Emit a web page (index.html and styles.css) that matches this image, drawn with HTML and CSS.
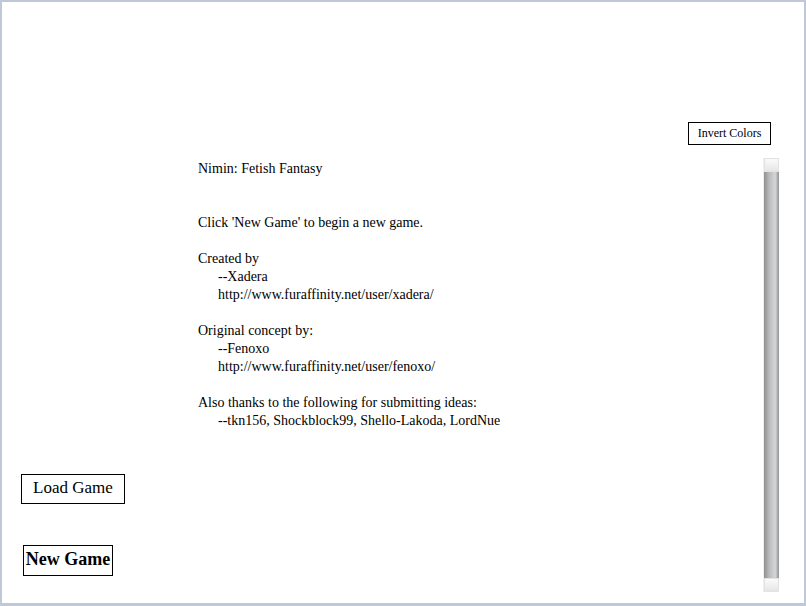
FILE: index.html
```html
<!DOCTYPE html>
<html lang="en">
  <head>
    <meta charset="UTF-8" />
    <title>Nimin: Fetish Fantasy</title>
    <link rel="stylesheet" href="styles.css">
  </head>
  <body>
    <div class="frame">
      <div class="topbar">
        <button class="btn-small" id="invert-btn">Invert Colors</button>
      </div>

      <div class="main">
        <div class="sidebar">
          <button class="btn-side" id="load-btn">Load Game</button>
          <button class="btn-side btn-new" id="new-btn">New Game</button>
        </div>

        <div class="story" id="story">
          <p>Nimin: Fetish Fantasy</p>
          <br><br>
          <p>Click 'New Game' to begin a new game.</p>
          <br>
          <p>Created by</p>
          <p class="indent">--Xadera</p>
          <p class="indent">http://www.furaffinity.net/user/xadera/</p>
          <br>
          <p>Original concept by:</p>
          <p class="indent">--Fenoxo</p>
          <p class="indent">http://www.furaffinity.net/user/fenoxo/</p>
          <br>
          <p>Also thanks to the following for submitting ideas:</p>
          <p class="indent">--tkn156, Shockblock99, Shello-Lakoda, LordNue</p>
        </div>

        <div class="scrollbar">
          <div class="scroll-cap"></div>
          <div class="scroll-thumb"></div>
          <div class="scroll-cap"></div>
        </div>
      </div>
    </div>
  </body>
</html>
```

FILE: styles.css
```css
* {
  box-sizing: border-box;
}

body {
  margin: 0;
  background: #fff;
  font-family: "Liberation Serif", "Times New Roman", serif;
  color: #000;
}

.frame {
  width: 806px;
  height: 606px;
  border: 2px solid #bfc8d6;
  border-bottom-width: 3px;
  background: #fff;
  display: flex;
  flex-direction: column;
}

.topbar {
  display: flex;
  justify-content: flex-end;
  padding: 120px 33px 0 0;
  height: 156px;
}

.btn-small {
  font-family: inherit;
  font-size: 12px;
  background: #fff;
  border: 1px solid #000;
  border-radius: 0;
  height: 23px;
  width: 83px;
  padding: 0;
  color: #000;
}

.main {
  display: flex;
  flex: 1;
  padding: 0 25px 11px 0;
}

.sidebar {
  width: 196px;
  display: flex;
  flex-direction: column;
  align-items: flex-start;
  padding-top: 316px;
}

.btn-side {
  font-family: inherit;
  font-size: 17px;
  background: #fff;
  border: 1px solid #000;
  border-radius: 0;
  color: #000;
  height: 30px;
  width: 104px;
  padding: 0 0 2px;
  margin-left: 19px;
}

.btn-new {
  font-size: 18px;
  font-weight: bold;
  width: 90px;
  height: 31px;
  margin-left: 21px;
  margin-top: 41px;
}

.story {
  flex: 1;
  font-size: 14px;
  line-height: 18px;
  padding-top: 2px;
}

.story p {
  margin: 0;
}

.indent {
  padding-left: 20px;
}

.scrollbar {
  width: 16px;
  display: flex;
  flex-direction: column;
  border-left: 1px solid #f0f0f0;
}

.scroll-cap {
  height: 14px;
  background: linear-gradient(#fafafa, #e6e6e6);
  border: 1px solid #e2e2e2;
}

.scroll-thumb {
  flex: 1;
  background: linear-gradient(to right, #8d8f91, #b9bbbd 35%, #d4d6d8 75%, #8f9193);
}
```
